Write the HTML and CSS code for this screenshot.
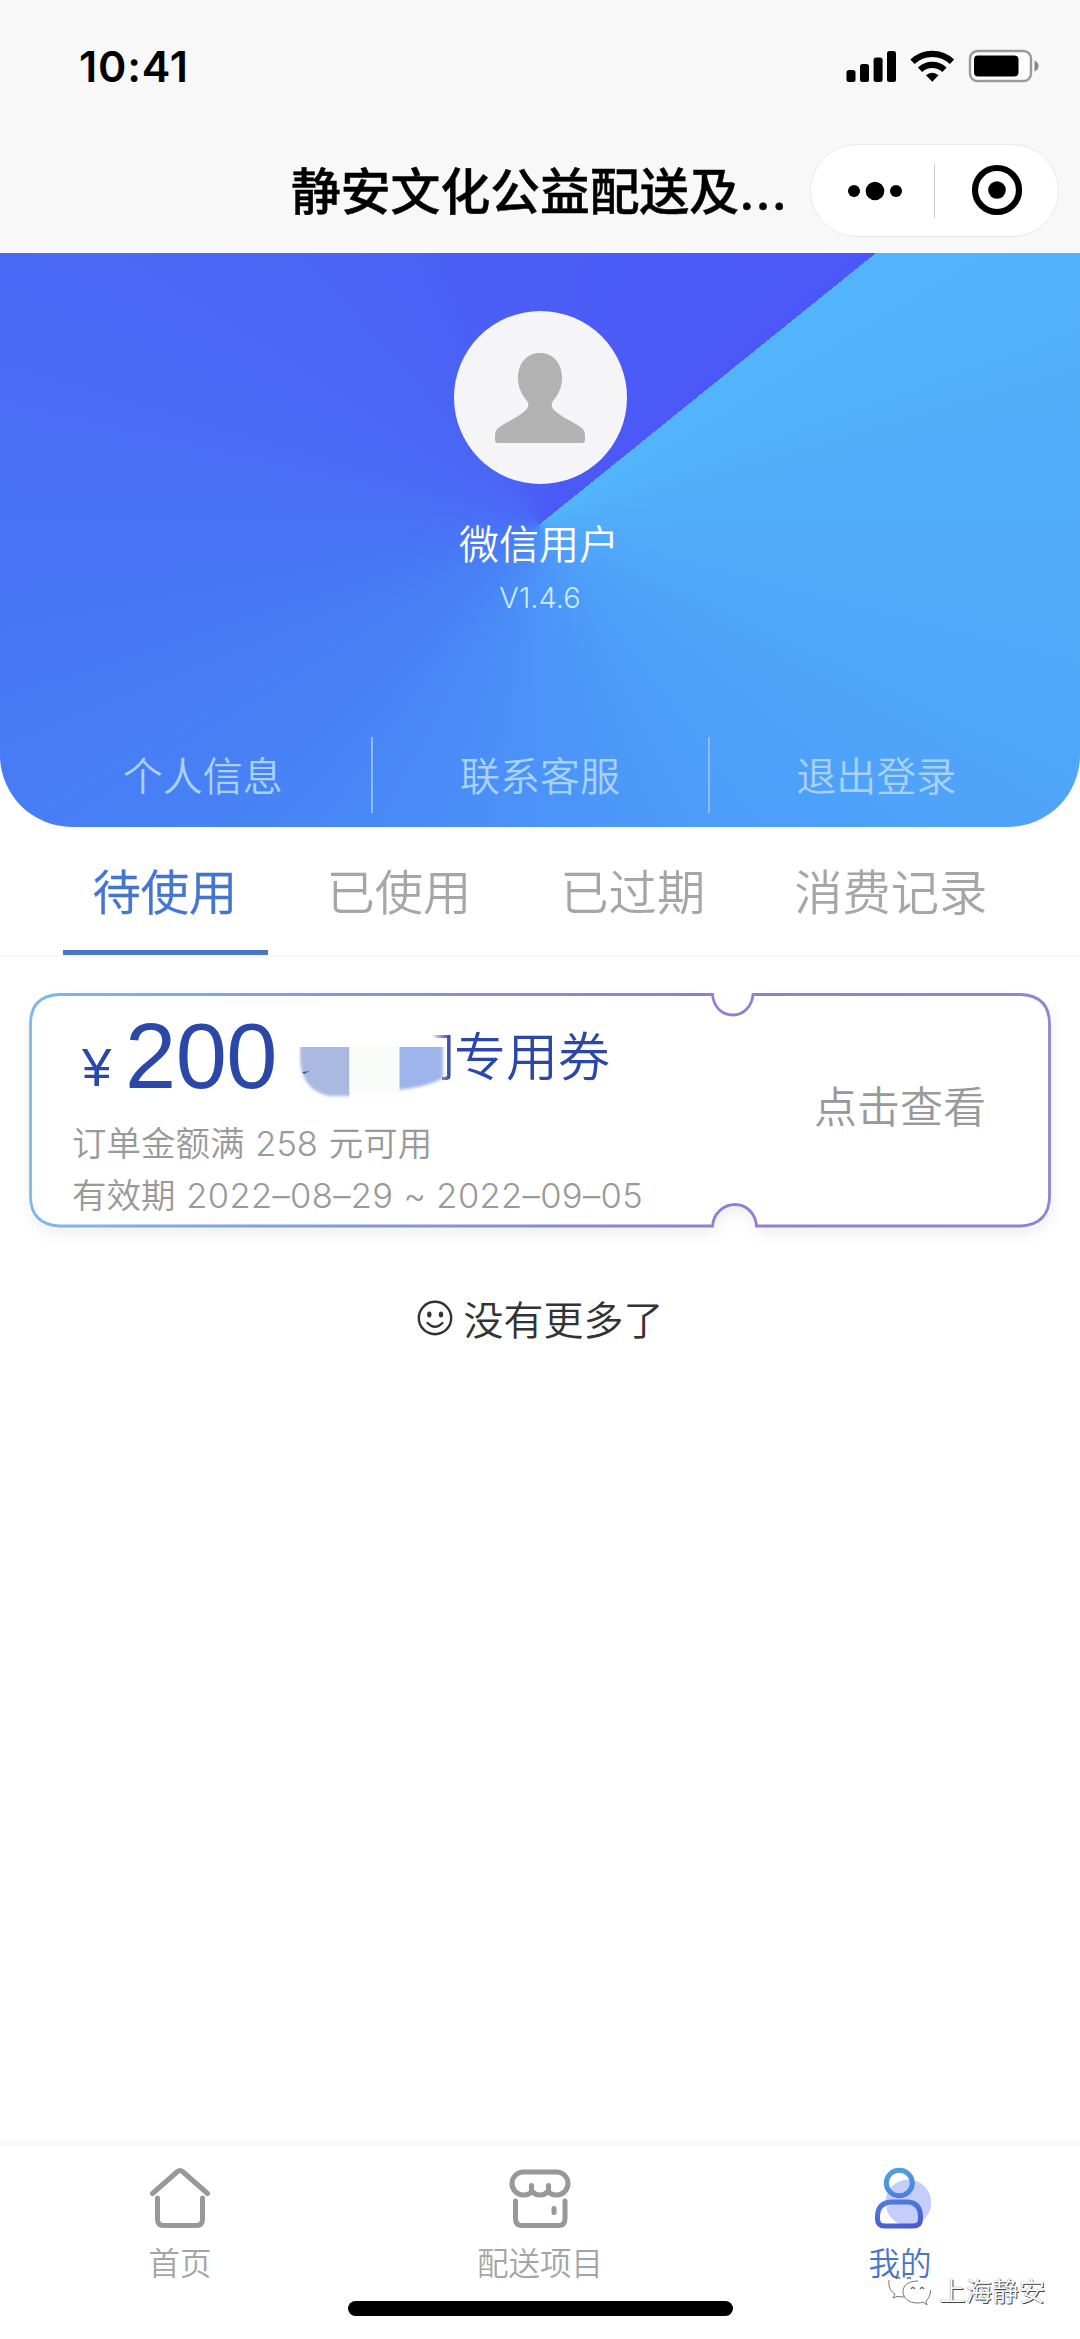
FILE: index.html
```html
<!DOCTYPE html>
<html lang="zh-CN">
<head>
<meta charset="utf-8">
<title>静安文化公益配送及...</title>
<link rel="stylesheet" href="styles.css">
</head>
<body>
<div class="app">
  <header class="top">
    <div class="status">
      <span class="time">10:41</span>
      <svg class="status-icons" width="194" height="34" viewBox="0 0 194 34">
        <rect x="1.5" y="21" width="9" height="12" rx="2.5"/>
        <rect x="15" y="15" width="9" height="18" rx="2.5"/>
        <rect x="28.600" y="8.500" width="9" height="24.500" rx="2.500"/>
        <rect x="42" y="2" width="9" height="31" rx="2.500"/>
        <g fill="none" stroke="#000" stroke-width="6.200">
          <path d="M67.500 12.800a28.500 28.500 0 0 1 39.500 0"/>
          <path d="M75 20.700a18 18 0 0 1 24.500 0"/>
        </g>
        <path d="M81 26.200a9 9 0 0 1 12.500 0l-6.200 6.500z"/>
        <rect x="125" y="2" width="61" height="30" rx="7.500" fill="#fff" stroke="#999" stroke-width="2.400"/>
        <rect x="129" y="6.500" width="44.500" height="21" rx="4"/>
        <path d="M189.500 11.500q4 1.500 4 5.500t-4 5.500z" fill="#888"/>
      </svg>
    </div>
    <div class="navbar">
      <h1 class="title">静安文化公益配送及<span class="dots">...</span></h1>
      <div class="capsule">
        <svg width="54" height="20" viewBox="0 0 54 20" class="more"><circle cx="6" cy="10" r="6"/><circle cx="27" cy="10" r="9.300"/><circle cx="48" cy="10" r="6"/></svg>
        <i class="capsule-line"></i>
        <svg width="52" height="52" viewBox="0 0 52 52" class="target"><circle cx="26" cy="26" r="22" fill="none" stroke="#000" stroke-width="6.200"/><circle cx="26" cy="26" r="8.800"/></svg>
      </div>
    </div>
  </header>

  <section class="hero">
    <div class="avatar">
      <svg width="90" height="90" viewBox="0 0 90 90"><path fill="#b2b2b2" d="M45 0C58 0 67 10 67 25C67 36 62 43 58 48C56 51 56 54 59 57C65 63 76 68 84 73Q90 76.500 90 82V87Q90 90 87 90H3Q0 90 0 87V82Q0 76.500 6 73C14 68 25 63 31 57C34 54 34 51 32 48C28 43 23 36 23 25C23 10 32 0 45 0Z"/></svg>
    </div>
    <div class="name">微信用户</div>
    <div class="version">V1.4.6</div>
    <nav class="links">
      <a class="link">个人信息</a>
      <a class="link">联系客服</a>
      <a class="link">退出登录</a>
    </nav>
  </section>

  <nav class="tabs">
    <a class="tab active">待使用</a>
    <a class="tab">已使用</a>
    <a class="tab">已过期</a>
    <a class="tab">消费记录</a>
  </nav>

  <article class="coupon">
    <svg class="outline" width="1022" height="235" viewBox="0 0 1022 235">
      <defs>
        <linearGradient id="edge" gradientUnits="userSpaceOnUse" x1="0" y1="0" x2="1022" y2="0">
          <stop offset="0" stop-color="#7eb8ea"/><stop offset=".3" stop-color="#8497dc"/><stop offset=".65" stop-color="#8d80d2"/><stop offset="1" stop-color="#9284d2"/>
        </linearGradient>
      </defs>
      <path fill="#fff" stroke="url(#edge)" stroke-width="2.800" d="M30 1.500H683.500C684.500 14 693 22 704 22S723 13 724 1.500H992Q1020.500 3 1020.500 31V203Q1020.500 231 992 233H727.500C726.500 220 717 211.500 706 211.500S684.500 220 683.500 233H30Q1.500 231 1.500 203V31Q1.500 3 30 1.500Z"/>
    </svg>
    <div class="info">
      <div class="headline">
        <span class="yen">¥</span>
        <span class="amount">200</span>
        <svg class="smudge" width="160" height="66" viewBox="0 0 160 66">
          <defs>
            <filter id="soft" x="-10%" y="-10%" width="120%" height="120%"><feGaussianBlur stdDeviation="1.800"/></filter>
            <clipPath id="left"><rect x="6" y="21" width="50.500" height="52"/></clipPath>
            <clipPath id="right"><rect x="106.500" y="21" width="48" height="48"/></clipPath>
            <linearGradient id="stroke" x1="0" x2="1"><stop offset="0" stop-color="#2b429e" stop-opacity=".1"/><stop offset="1" stop-color="#2b429e"/></linearGradient>
          </defs>
          <g clip-path="url(#left)"><path filter="url(#soft)" fill="#a9b9df" d="M7 16H65V70H36Q7 64 7 30Z"/></g>
          <rect x="56.500" y="21" width="50" height="46" fill="#f9fdf9"/>
          <g clip-path="url(#right)"><path filter="url(#soft)" fill="#9fb4ec" d="M98 16H150V52Q130 63 98 64Z"/></g>
          <path d="M9 46l8-1-6 3z" fill="#46549a"/>
          <path fill="url(#stroke)" d="M139 9H157.500V50Q157.500 54 153 54H149V51H152Q154 51 154 49V12H143Z"/>
        </svg>
        <span class="kind">专用券</span>
      </div>
      <p class="desc">订单金额满 <span class="num amount-min">258</span> 元可用</p>
      <p class="desc">有效期 <span class="num date">2022–08–29 ~ 2022–09–05</span></p>
    </div>
    <a class="view">点击查看</a>
  </article>

  <div class="end">
    <svg width="36" height="36" viewBox="0 0 36 36"><g fill="none" stroke="#333" stroke-width="2.400" stroke-linecap="round"><circle cx="18" cy="18" r="16.200"/><path d="M10.500 23q7.500 7.500 15 0"/></g><ellipse cx="12.300" cy="14.500" rx="2.200" ry="3" fill="#333"/><ellipse cx="24" cy="14.500" rx="2.200" ry="3" fill="#333"/></svg>
    <span>没有更多了</span>
  </div>

  <footer class="bottom">
    <div class="tabbar">
      <a class="item">
        <svg width="62" height="62" viewBox="0 0 62 62" fill="none" stroke="#979899" stroke-width="5" stroke-linecap="round" stroke-linejoin="round"><path d="M3.500 26.500L28.500 4.500Q31 2.500 33.500 4.500L58.500 26.500"/><path d="M8.500 31V52Q8.500 58.500 14.500 58.500H47.500Q53.500 58.500 53.500 52V31"/></svg>
        <span>首页</span>
      </a>
      <a class="item">
        <svg width="62" height="62" viewBox="0 0 62 62" fill="none" stroke="#979899" stroke-width="5" stroke-linecap="round" stroke-linejoin="round"><path d="M15 5H47A11.500 11.500 0 0 1 48 28Q42 28.500 39.500 24Q36 28 31 28T22.500 24Q20 28.500 14 28A11.500 11.500 0 0 1 15 5ZM22.500 24V18.500M39.500 24V18.500"/><path d="M6.500 34V51.500Q6.500 58.500 13 58.500H49.500Q56 58.500 56 51.500V34M45 41.500V45.500"/></svg>
        <span>配送项目</span>
      </a>
      <a class="item current">
        <svg width="62" height="62" viewBox="0 0 62 62" fill="none">
          <defs><linearGradient id="me" gradientUnits="userSpaceOnUse" x1="24" y1="0" x2="36" y2="62"><stop offset="0" stop-color="#50a6e0"/><stop offset="1" stop-color="#4b58d4"/></linearGradient></defs>
          <circle cx="39.300" cy="35.500" r="23" fill="#c5cdfa"/>
          <path d="M13 55Q10 45 15.500 34L24 34L18 42Q19 51 25 56Z" fill="#fff" opacity=".5"/>
          <g stroke="url(#me)" stroke-width="5"><ellipse cx="30.300" cy="16" rx="13" ry="12.700"/><path d="M22 35H39Q51.500 36 51.500 50V52Q51.500 59 44 59H16Q8.500 59 8.500 52V50Q8.500 36 22 35Z"/></g>
        </svg>
        <span>我的</span>
      </a>
    </div>
    <i class="home-bar"></i>
    <div class="credit">
      <svg width="46" height="34" viewBox="0 0 46 34"><g fill="none" stroke="#777" stroke-width="1"><path d="M2 6C1 13 4 18 8 20L6 24L10 22.500L17 23"/><path fill="#fff" d="M31 7C22 7 16 11 16 17.500C16 24 22 29 30 29Q34 29 36 28L40 31L39 27Q43.500 23 43.500 16" /></g><g fill="none" stroke="#666" stroke-width="1.300"><path d="M9 5q2-3 4 0M20 5q2-3 4 0M24 15q2-3 4 0M33 15q2-3 4 0"/></g></svg>
      <span>上海静安</span>
    </div>
  </footer>
</div>
</body>
</html>
```
FILE: styles.css
```css
* { box-sizing: border-box; }
body {
  margin: 0;
  background: #fff;
  font-family: Inter, "Noto Sans CJK SC", sans-serif;
  font-weight: 350;
}
svg { display: block; flex: none; }
.app { width: 1080px; height: 2339px; display: flex; flex-direction: column; overflow: hidden; }

.top { height: 253px; background: #f8f8f8; }
.status { height: 132px; padding: 0 41px 0 79px; display: flex; align-items: center; justify-content: space-between; }
.time { font-size: 43px; font-weight: 600; line-height: 60px; letter-spacing: .8px; }
.navbar { height: 121px; padding: 12px 21px 0 291px; display: flex; justify-content: space-between; align-items: flex-start; }
.title {
  margin: 10px 0 0;
  font: 500 49.800px/68px "Noto Sans CJK SC", sans-serif;
  -webkit-text-stroke: .5px #000;
  white-space: nowrap;
}
.dots { font-family: Inter, sans-serif; letter-spacing: 1.2px; }
.capsule {
  width: 249px; height: 93px; border: 1px solid #e9e9e9; border-radius: 47px; background: #fff;
  display: flex; align-items: center; padding-left: 37px;
}
.capsule-line { width: 1px; height: 54px; margin-left: 32px; background: #ccc; }
.target { margin: 0 0 2px 36px; }

.hero {
  height: 574px; padding: 58px 35px 14px;
  display: flex; flex-direction: column; align-items: center;
  border-radius: 0 0 72px 72px;
  background: conic-gradient(from 51.1deg at 540px 271px, #52b5fa 0deg, #51a9fa 50deg, #4d9ff9 90deg, #4b93f8 130deg, #477ff5 185deg, #496ff7 225deg, #4a60f5 290deg, #4b58f7 360deg);
  color: #fff;
}
.avatar { width: 173px; height: 173px; border-radius: 50%; background: #f5f5f7; display: flex; justify-content: center; padding-top: 42px; }
.name { margin: 36px 2px 0 0; font-size: 40px; line-height: 50px; }
.version { margin-top: 8px; font-size: 29px; line-height: 40px; color: #c8ecfd; font-weight: 300; }
.links { align-self: stretch; height: 76px; margin: auto 1px 0 0; display: grid; grid-template-columns: repeat(3, 1fr); }
.link { display: flex; align-items: center; justify-content: center; padding: 0 1px 3px 0; font-size: 40px; color: #a9d2fb; }
.link + .link { border-left: 2px solid #8ebcf9; }

.tabs { height: 130px; flex: none; padding-left: 63px; display: flex; gap: 29px; border-bottom: 2px solid #f6f6f6; }
.tab { height: 128px; padding: 0 30.500px 0 29.500px; font-size: 48.300px; line-height: 132px; color: #a6a6a6; white-space: nowrap; }
.tab.active { color: #4476cf; border-bottom: 5px solid #4b77c9; -webkit-text-stroke: .4px #4476cf; }

.coupon { position: relative; width: 1022px; height: 235px; flex: none; margin: 36px 0 0 29px; display: flex; }
.outline { position: absolute; inset: 0; filter: drop-shadow(2px 7px 7px rgba(0, 0, 0, .06)); }
.info { position: relative; width: 684px; padding: 23px 0 0 43px; }
.headline { height: 80px; display: flex; align-items: center; color: #2b48a8; }
.yen { margin: 24px 0 0 10px; width: 43px; font: 400 53px/60px "Liberation Sans", sans-serif; }
.amount { width: 168px; font: 400 92px/80px "Liberation Sans", sans-serif; letter-spacing: -.5px; }
.smudge { margin: 6px 0 0; overflow: visible; }
.kind { margin: -4px 0 0 1px; font-size: 52px; line-height: 80px; white-space: nowrap; font-family: "Noto Sans CJK SC", sans-serif; }
.desc { margin: 0; font-size: 34.500px; line-height: 52px; color: #999; white-space: nowrap; }
.num { font-weight: 300; }
.amount-min { margin: 0 1px; }
.date { margin-left: 1px; letter-spacing: .35px; }
.headline + .desc { margin-top: 22px; }
.view { position: relative; margin-left: 101px; font-size: 43px; line-height: 229px; color: #999; }

.end { display: flex; justify-content: center; align-items: center; gap: 11px; height: 60px; margin-top: 60px; color: #333; font-size: 40px; }

.bottom { position: relative; height: 199px; margin-top: auto; border-top: 6px solid #f9f9f9; display: flex; flex-direction: column; align-items: center; }
.tabbar { width: 100%; padding-top: 21px; display: grid; grid-template-columns: repeat(3, 1fr); }
.item { display: flex; flex-direction: column; align-items: center; font-size: 31.500px; line-height: 44px; color: #a5a5a5; }
.item span { margin-top: 13px; }
.item.current { color: #4a74c8; }
.home-bar { width: 385px; height: 15px; margin-top: 15px; border-radius: 8px; background: #000; }
.credit { position: absolute; left: 887px; top: 125px; display: flex; align-items: center; gap: 6px; font-size: 26.600px; line-height: 40px; color: #fff; text-shadow: 1px 1px 0 #444, 0 0 1px #555; }
```
